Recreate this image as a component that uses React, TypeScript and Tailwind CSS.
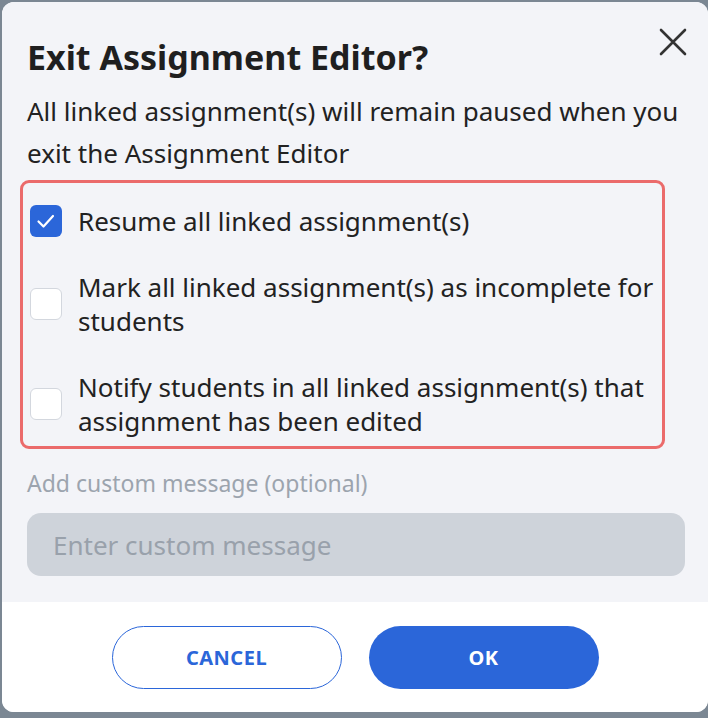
import React, { useState } from 'react';

const options = [
  { id: 'resume', label: 'Resume all linked assignment(s)' },
  { id: 'incomplete', label: 'Mark all linked assignment(s) as incomplete for students' },
  { id: 'notify', label: 'Notify students in all linked assignment(s) that assignment has been edited' },
];

function Checkbox({ checked }: { checked: boolean }) {
  if (checked) {
    return (
      <span className="w-[32px] h-[32px] shrink-0 rounded-[6px] bg-[#2b66d9] flex items-center justify-center">
        <svg width="32" height="32" viewBox="0 0 32 32" fill="none">
          <path d="M8.5 16.5l5 5 9.5-10.5" stroke="#fff" strokeWidth="2.2" strokeLinecap="round" strokeLinejoin="round" />
        </svg>
      </span>
    );
  }
  return <span className="w-[32px] h-[32px] shrink-0 rounded-[6px] bg-white border border-[#d3d7de]" />;
}

export default function App() {
  const [checked, setChecked] = useState<Record<string, boolean>>({ resume: true });

  return (
    <div className="w-[708px] h-[718px] bg-[#7b8793] pt-[2px] pl-[2px] font-['Noto_Sans',sans-serif]">
      <div className="relative w-[706px] h-[710px] rounded-[12px] overflow-hidden flex flex-col bg-white">
        {/* Body */}
        <div className="bg-[#f3f4f8] pl-[25px] pr-[23px] pt-[36px] pb-[26px]">
          <h2 className="text-[34px] leading-[38px] font-bold text-[#1f1f1f]">Exit Assignment Editor?</h2>
          <button className="absolute top-[25px] right-[20px] w-[30px] h-[30px] flex items-center justify-center">
            <svg width="28" height="28" viewBox="0 0 28 28" fill="none">
              <path d="M2 2l24 24M26 2L2 26" stroke="#333" strokeWidth="2.6" strokeLinecap="round" />
            </svg>
          </button>

          <p className="mt-[14px] text-[26px] leading-[42px] text-[#222]">
            All linked assignment(s) will remain paused when you exit the Assignment Editor
          </p>

          <div className="mt-[6px] ml-[-7px] w-[645px] border-[3px] border-[#eb6b6b] rounded-[9px] pl-[7px] pt-[21px] pb-[8px] flex flex-col gap-[32px]">
            {options.map(o => (
              <label
                key={o.id}
                className="flex items-center gap-[16px] cursor-pointer"
                onClick={() => setChecked(c => ({ ...c, [o.id]: !c[o.id] }))}
              >
                <Checkbox checked={!!checked[o.id]} />
                <span className="text-[26px] leading-[34px] text-[#222]">{o.label}</span>
              </label>
            ))}
          </div>

          <p className="mt-[20px] text-[23px] leading-[28px] text-[#9ca4ae]">Add custom message (optional)</p>
          <input
            disabled
            placeholder="Enter custom message"
            className="mt-[16px] w-full h-[63px] rounded-[14px] bg-[#ced3da] px-[26px] text-[26px] placeholder:text-[#99a1ab] outline-none"
          />
        </div>

        {/* Footer */}
        <div className="flex-1 bg-white flex items-start justify-center gap-[27px] pt-[24px]">
          <button className="w-[230px] h-[63px] rounded-full border border-[#2b66d9] text-[#2b66d9] text-[20px] font-bold tracking-wide">
            CANCEL
          </button>
          <button className="w-[230px] h-[63px] rounded-full bg-[#2b66d9] text-white text-[20px] font-bold tracking-wide">
            OK
          </button>
        </div>
      </div>
    </div>
  );
}
